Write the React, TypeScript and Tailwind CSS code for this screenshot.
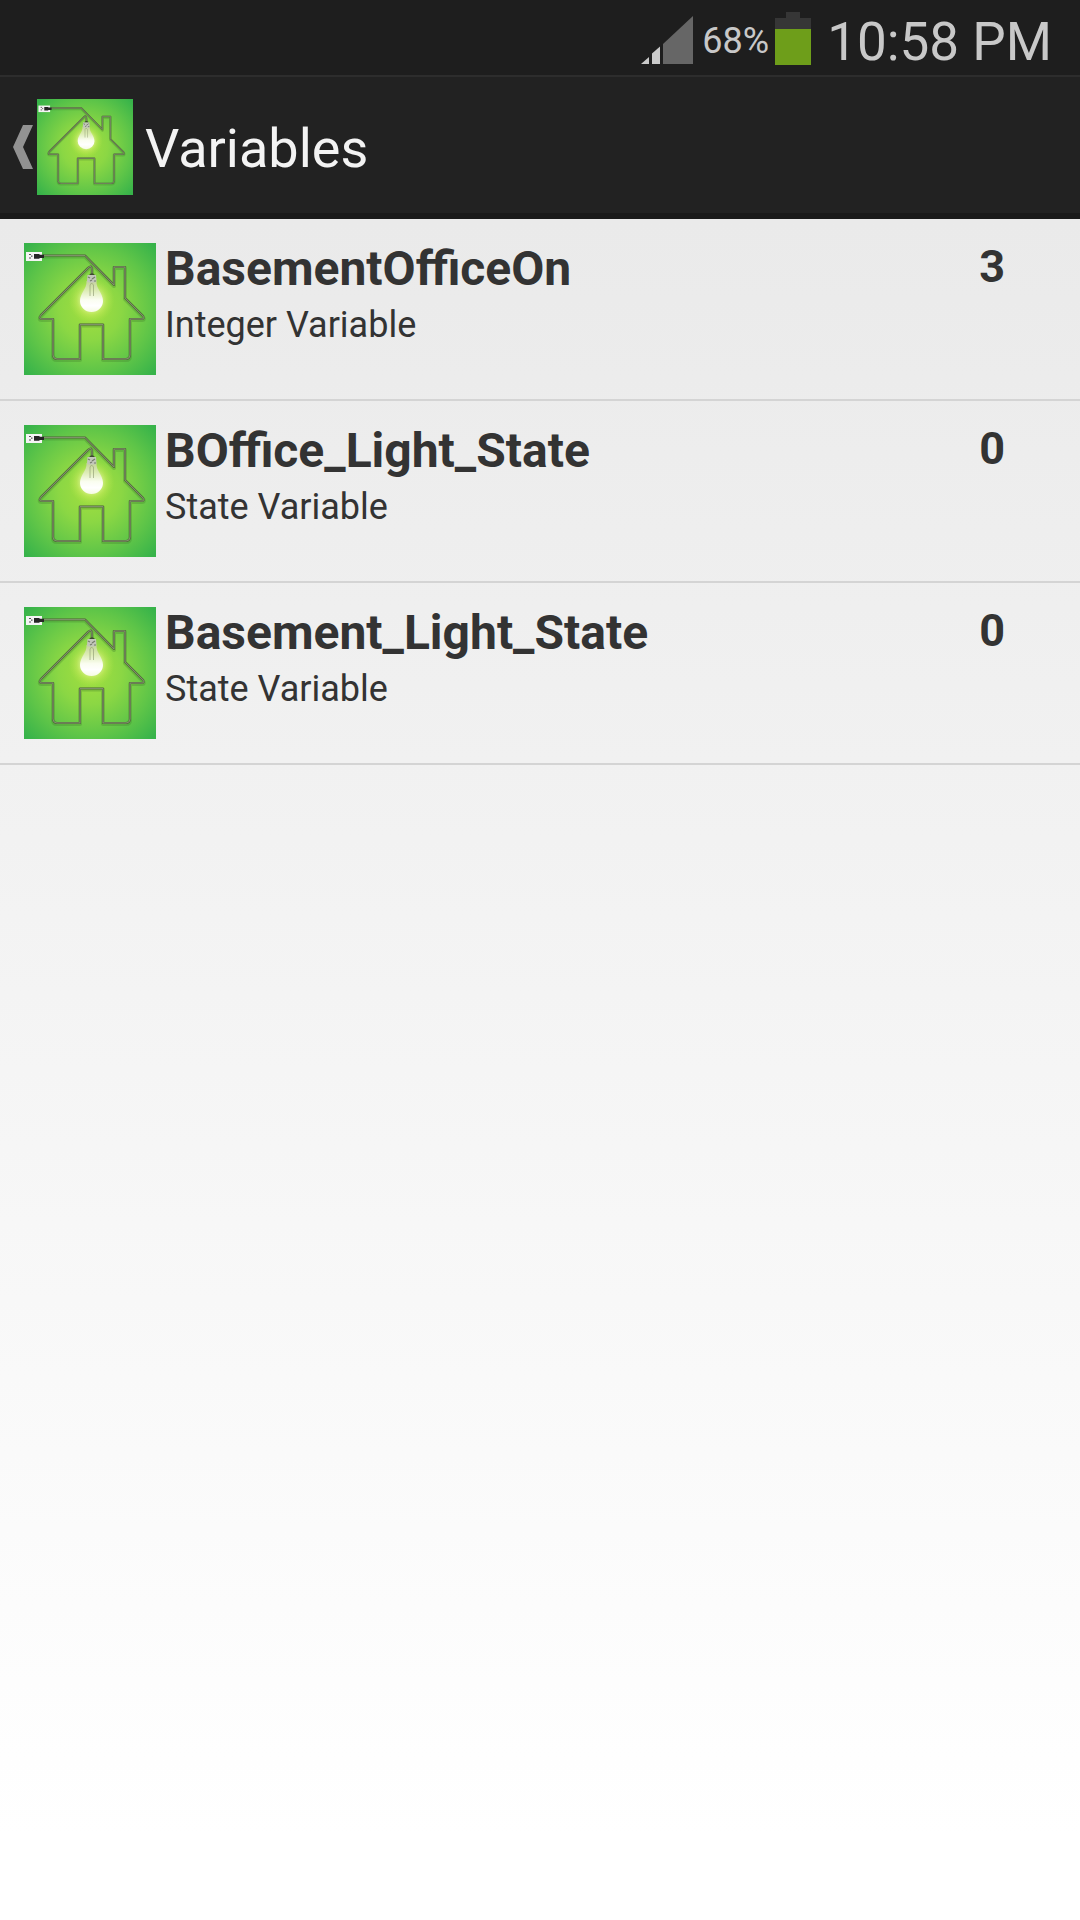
import React, { useId } from "react";

type Variable = { name: string; kind: string; value: number };

const variables: Variable[] = [
  { name: "BasementOfficeOn", kind: "Integer Variable", value: 3 },
  { name: "BOffice_Light_State", kind: "State Variable", value: 0 },
  { name: "Basement_Light_State", kind: "State Variable", value: 0 },
];

// One continuous cable: runs from the outlet, outlines the house and ends at the bulb.
const CABLE =
  "M19 12.500H61L90 42V24H101V55L119 73Q121 76 118 76H106V112Q106 116 102 116H79V81.500H56V116H33Q29 116 29 112V76H18Q14 76 17 72L64 25Q68 21 68 27V31";

function HouseIcon({ className }: { className: string }) {
  const id = useId();
  return (
    <svg viewBox="0 0 132 132" className={className} aria-hidden="true">
      <defs>
        <radialGradient id={`${id}bg`} gradientUnits="userSpaceOnUse" cx="66" cy="66" r="90">
          <stop offset="0" stopColor="#a3df3f" />
          <stop offset="0.35" stopColor="#8bd744" />
          <stop offset="0.7" stopColor="#5fc548" />
          <stop offset="1" stopColor="#37b34a" />
        </radialGradient>
        <radialGradient id={`${id}glow`}>
          <stop offset="0.4" stopColor="#f4fcc0" stopOpacity="0.7" />
          <stop offset="0.65" stopColor="#d8f26c" stopOpacity="0.4" />
          <stop offset="1" stopColor="#b8e84a" stopOpacity="0" />
        </radialGradient>
        <linearGradient id={`${id}glass`} x1="0" y1="0" x2="0" y2="1">
          <stop offset="0" stopColor="#c3d19c" />
          <stop offset="0.3" stopColor="#dcebb4" />
          <stop offset="0.6" stopColor="#fafdf0" />
          <stop offset="0.8" stopColor="#ffffff" />
          <stop offset="1" stopColor="#f6fbe4" />
        </linearGradient>
      </defs>
      <rect width="132" height="132" fill={`url(#${id}bg)`} />
      <g fill="none" strokeLinejoin="round">
        <path d={CABLE} stroke="#3f7a2a" strokeOpacity="0.3" strokeWidth="4" transform="translate(0 1)" />
        <path d={CABLE} stroke="#56693f" strokeWidth="2" />
        <path d={CABLE} stroke="#8fa37c" strokeWidth="0.7" />
      </g>
      <rect x="2" y="9" width="16" height="9" fill="#f4f4f4" />
      <path d="M5 11.500h2M5 15h2M7 13.200h1.500" stroke="#555" strokeWidth="1.2" />
      <path d="M10 11h5l1 .7h4v3.300h-4l-1 .8h-5z" fill="#262626" />
      <circle cx="67.500" cy="57" r="23" fill={`url(#${id}glow)`} />
      <path
        d="M62.500 38C63 46 56 50 56 58A11.500 11 0 0 0 79 58C79 50 72 46 72.500 38Z"
        fill={`url(#${id}glass)`}
      />
      <path
        d="M66 53V42L67.500 40L69.500 42V53"
        fill="none"
        stroke="#97a37a"
        strokeOpacity="0.7"
        strokeWidth="1"
      />
      <path d="M63.500 32H72L72.500 38L71 39.500H64.500L63 38Z" fill="#c2c6ba" />
      <path d="M64 34l2 1M68 36l3-2M66 38l2-1M70 38h2" fill="none" stroke="#757b6c" strokeWidth="1.2" />
      <path d="M65 32q3-3.500 6 0z" fill="#3b4a2c" />
    </svg>
  );
}

function SignalIcon() {
  return (
    <svg viewBox="0 0 52 48" className="h-12 w-[52px]" role="img" aria-label="Signal strength">
      <path d="M0 48L8 41V48Z" fill="#cacaca" />
      <path d="M11 48V37.500L19 30.500V48Z" fill="#cacaca" />
      <path d="M22 48V28L52 0V48Z" fill="#666666" />
    </svg>
  );
}

function BatteryIcon() {
  return (
    <svg viewBox="0 0 36 53" className="h-[53px] w-9" role="img" aria-label="Battery">
      <path d="M11 0H25V6H36V17H0V6H11Z" fill="#363636" />
      <rect y="17" width="36" height="36" fill="#6e9e1a" />
    </svg>
  );
}

export default function App() {
  return (
    <div className="flex min-h-screen flex-col bg-[#1e1e1e] font-[Roboto,sans-serif] text-[#333333]">
      <div className="flex h-[75px] items-start justify-end pr-7 text-[#c8c8c8]">
        <div className="mt-4">
          <SignalIcon />
        </div>
        <span className="mt-5 ml-[9px] text-[36px] leading-[42px]">68%</span>
        <div className="mt-3 ml-1.5">
          <BatteryIcon />
        </div>
        <span className="mt-[10px] ml-4 text-[53px] leading-[64px]">10:58 PM</span>
      </div>

      <header className="flex h-36 items-center border-t-2 border-b-[6px] border-t-[#2d2d2d] border-b-[#1a1a1a] bg-[#222222] pt-1 pl-3">
        <button type="button" aria-label="Navigate up" className="flex items-center gap-[3px]">
          <svg viewBox="0 0 22 44" className="h-11 w-[22px]" aria-hidden="true">
            <path d="M11 0H21L11 22L21 44H11L1 22Z" fill="#929292" />
          </svg>
          <HouseIcon className="size-24" />
        </button>
        <h1 className="mt-1 ml-3 text-[54px] leading-[64px] text-[#f3f3f3]">Variables</h1>
      </header>

      <main className="grow bg-linear-to-b from-[#eaeaea] to-white to-95%">
        <ul>
          {variables.map((v) => (
            <li key={v.name} className="flex items-start border-b-2 border-[#d4d4d4] pl-6">
              <HouseIcon className="my-6 size-[132px] shrink-0" />
              <div className="mt-[22px] ml-[9px] grow">
                <h2 className="text-[48px] leading-[56px] font-bold">{v.name}</h2>
                <p className="mt-[7px] text-[36px] leading-[42px]">{v.kind}</p>
              </div>
              <span className="mt-[21px] mr-[75px] text-[45px] leading-[54px] font-bold">{v.value}</span>
            </li>
          ))}
        </ul>
      </main>
    </div>
  );
}
